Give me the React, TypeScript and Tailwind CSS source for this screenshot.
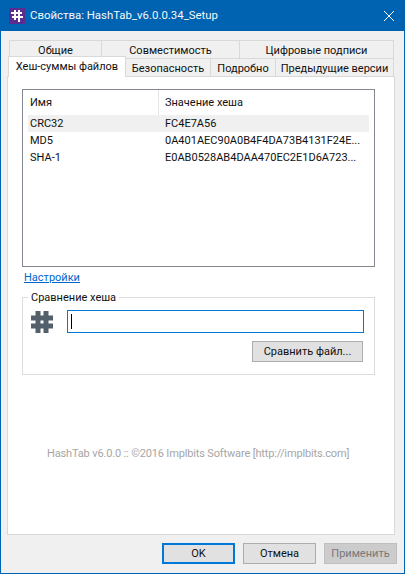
import React from "react";

function Tab({ w, label, className = "" }: { w: string; label: string; className?: string }) {
  return (
    <div className={`${w} ${className} flex items-center justify-center whitespace-nowrap border-t border-r border-[#d9d9d9] bg-[#f0f0f0] pt-[2px] text-[11px] text-[#111]`}>
      {label}
    </div>
  );
}

function Row({ a, b, sel }: { a: string; b: string; sel?: boolean }) {
  return (
    <div className={`flex h-[17px] items-center whitespace-nowrap ${sel ? "bg-[#f0f0f0]" : ""}`}>
      <div className="w-[137px] shrink-0 pl-[2px]">{a}</div>
      <div>{b}</div>
    </div>
  );
}

export default function App() {
  return (
    <div
      className="flex h-[574px] w-[405px] flex-col overflow-hidden border border-t-0 border-[#0063b1] bg-[#f0f0f0] text-[11px] leading-none text-[#111]"
      style={{ fontFamily: 'Roboto, "Noto Sans", sans-serif' }}
    >
      <div className="-mx-px flex h-[31px] shrink-0 items-center bg-[#0063b1] pl-[9px] pr-[10px] text-white">
        <svg width="16" height="16" viewBox="0 0 16 16" className="shrink-0">
          <rect width="16" height="16" fill="#5c2d91" />
          <path d="M6 2v10M10 2v12M2 5h11M3 9h11" stroke="#fff" strokeWidth="2" fill="none" />
        </svg>
        <div className="ml-[5px] flex-1 whitespace-nowrap text-[11.4px] text-[#f4f8fb]">Свойства: HashTab_v6.0.0.34_Setup</div>
        <svg width="12" height="12" viewBox="0 0 12 12">
          <path d="M1 1l10 10M11 1L1 11" stroke="#fff" strokeWidth="1" fill="none" />
        </svg>
      </div>

      <div className="flex flex-1 flex-col px-[6px] pt-[9px]">
        <div className="ml-[2px] flex h-[18px] w-[385px] border-l border-[#d9d9d9]">
          <Tab w="w-[92px]" label="Общие" />
          <Tab w="w-[138px]" label="Совместимость" />
          <Tab w="w-[154px]" label="Цифровые подписи" />
        </div>
        <div className="relative z-10 ml-[1px] flex h-[18px] items-stretch">
          <div className="relative z-10 -mt-[2px] flex h-[21px] w-[118px] shrink-0 items-center justify-center whitespace-nowrap border border-b-0 border-[#d9d9d9] bg-white pb-[1px]">
            Хеш-суммы файлов
          </div>
          <Tab w="w-[85px]" label="Безопасность" className="border-b-0" />
          <Tab w="w-[65px]" label="Подробно" />
          <Tab w="w-[118px]" label="Предыдущие версии" />
        </div>

        <div className="flex h-[459px] w-[388px] flex-col border border-[#d9d9d9] bg-white pl-[14px] pr-[19px] pt-[12px]">
          <div className="flex h-[178px] w-[353px] shrink-0 flex-col border border-[#828790] px-[5px]">
            <div className="flex h-[25px] shrink-0 items-center whitespace-nowrap">
              <div className="flex h-full w-[131px] shrink-0 items-center border-r border-[#e5e5e5] pl-[2px]">Имя</div>
              <div className="pl-[6px]">Значение хеша</div>
            </div>
            <div>
              <Row a="CRC32" b="FC4E7A56" sel />
              <Row a="MD5" b="0A401AEC90A0B4F4DA73B4131F24E..." />
              <Row a="SHA-1" b="E0AB0528AB4DAA470EC2E1D6A723..." />
            </div>
          </div>

          <div className="mt-[5px] ml-[2px] h-[14px] text-[#0066cc] underline">Настройки</div>

          <div className="relative mt-[11px] h-[78px] w-[353px] shrink-0 border border-[#dcdcdc] pl-[8px] pr-[10px] pt-[12px]">
            <div className="absolute -top-[6px] left-[5px] bg-white px-[3px]">Сравнение хеша</div>
            <div className="flex items-center">
              <svg width="22" height="22" viewBox="0 0 22 22" className="shrink-0">
                <path d="M7 0v22M15 0v22M0 7h22M0 15h22" stroke="#545f6c" strokeWidth="5" fill="none" />
              </svg>
              <div className="ml-[14px] flex h-[23px] w-[297px] items-center border border-[#0078d7] pl-[3px]">
                <div className="h-[15px] w-px bg-black" />
              </div>
            </div>
            <div className="mt-[8px] flex justify-end pr-[1px]">
              <div className="flex h-[21px] w-[111px] items-center justify-center whitespace-nowrap border border-[#adadad] bg-[#e1e1e1]">Сравнить файл...</div>
            </div>
          </div>

          <div className="mt-[73px] whitespace-nowrap pl-[25px] text-[#a6a6a6] tracking-[-0.15px]">HashTab v6.0.0 :: ©2016 Implbits Software [http://implbits.com]</div>
        </div>

        <div className="mt-[8px] flex justify-end gap-[8px] pr-[1px]">
          <div className="flex h-[21px] w-[73px] items-center justify-center border-2 border-[#0078d7] bg-[#e1e1e1]">OK</div>
          <div className="flex h-[21px] w-[73px] items-center justify-center border border-[#adadad] bg-[#e1e1e1]">Отмена</div>
          <div className="flex h-[21px] w-[73px] items-center justify-center border border-[#bfbfbf] bg-[#cccccc] text-[#787878]">Применить</div>
        </div>
      </div>
    </div>
  );
}
